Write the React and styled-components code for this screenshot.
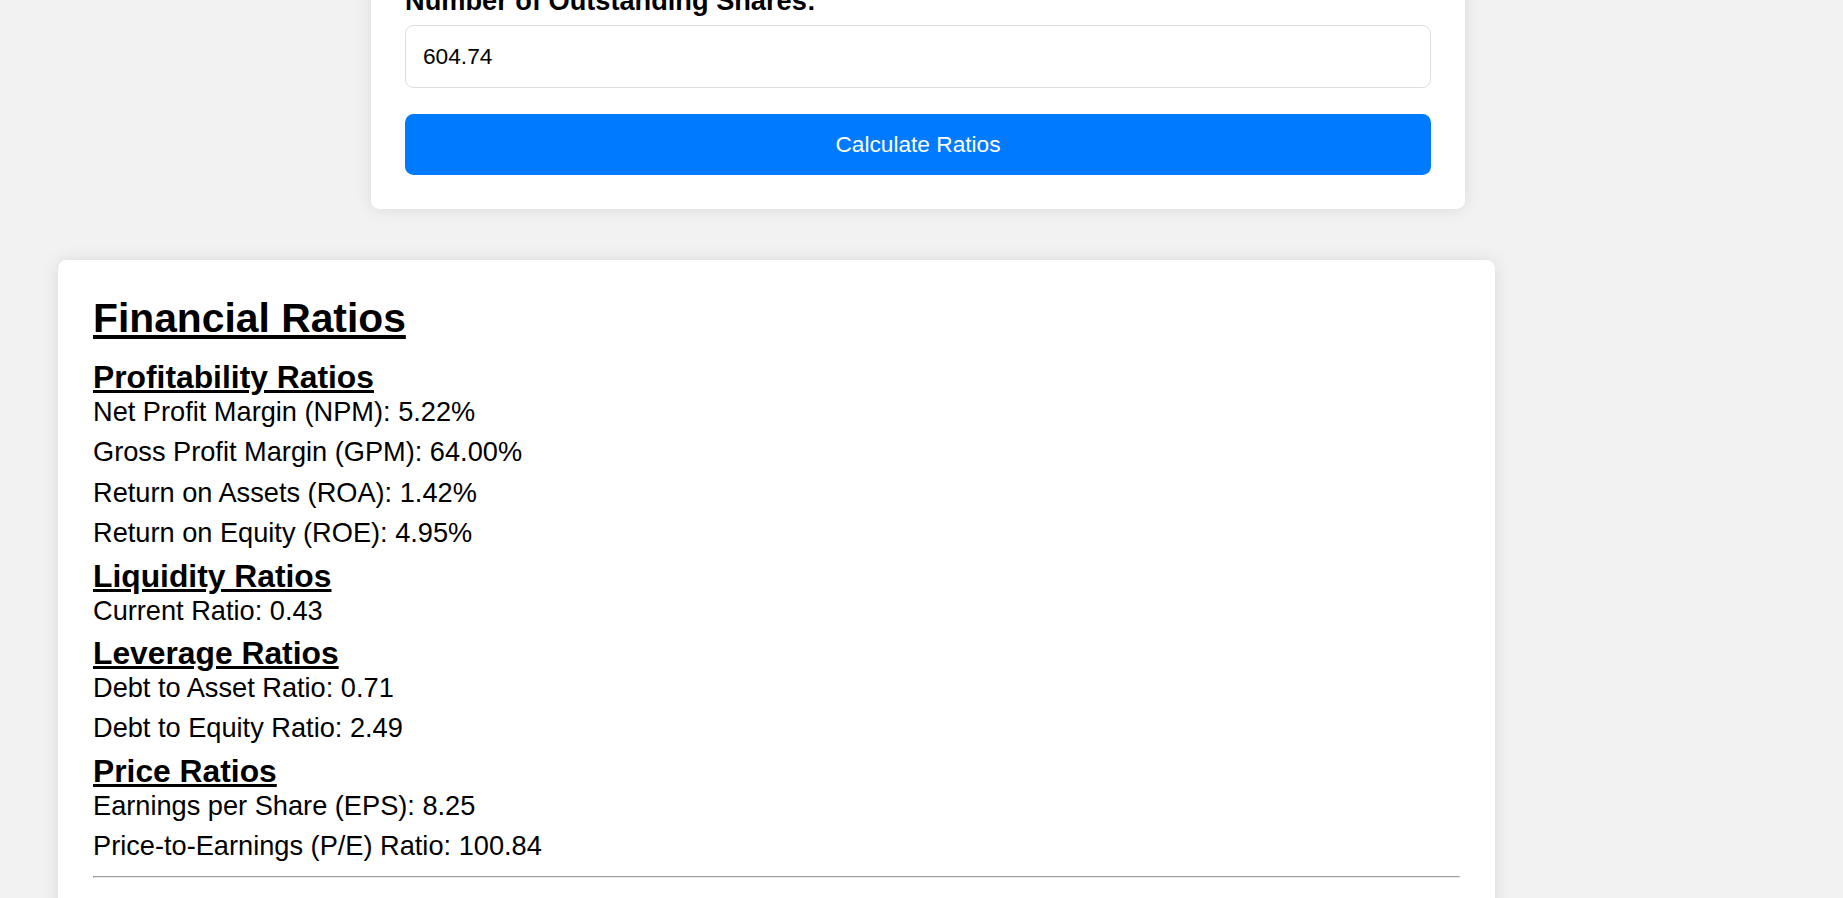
import React from "react";
import styled, { createGlobalStyle } from "styled-components";

const GlobalStyle = createGlobalStyle`
    body {
        margin: 0;
        background-color: #f2f2f2;
        font-family: "Liberation Sans", Arial, sans-serif;
        font-size: 27.2px;
        color: #000;
    }
`;

const Page = styled.div`
    display: flex;
    flex-direction: column;
    align-items: flex-start;
    padding: 0 8px 8px 8px;
`;

const FormCard = styled.div`
    box-sizing: border-box;
    width: 1094px;
    margin: -53px 0 0 363px;
    padding: 38px 34px 34px 34px;
    background-color: #fff;
    border-radius: 8.5px;
    box-shadow: 0 0 17px rgba(0, 0, 0, 0.1);
`;

const Label = styled.label`
    display: block;
    font-weight: bold;
    margin-bottom: 8px;
`;

const Input = styled.input`
    display: block;
    box-sizing: border-box;
    width: 100%;
    padding: 17px;
    border: 1px solid #ddd;
    border-radius: 8.5px;
    font-family: inherit;
    font-size: 22.7px;
    color: #000;
    margin-bottom: 26px;
    outline: none;
`;

const Button = styled.button`
    display: block;
    width: 100%;
    padding: 17px;
    border: none;
    border-radius: 8.5px;
    background-color: #007bff;
    color: #fff;
    font-family: inherit;
    font-size: 22.7px;
    cursor: pointer;
`;

const ResultsCard = styled.div`
    box-sizing: border-box;
    width: 1437px;
    margin: 51px 0 0 50px;
    padding: 35px 35px 60px 35px;
    background-color: #fff;
    border-radius: 8.5px;
    box-shadow: 0 0 17px rgba(0, 0, 0, 0.1);
`;

const Title = styled.h2`
    margin: 0 0 17px 0;
    font-size: 40.8px;
    text-decoration: underline;
`;

const GroupTitle = styled.h3`
    margin: 0;
    font-size: 31.8px;
    text-decoration: underline;
`;

const Ratio = styled.p`
    margin: 0 0 8.4px 0;
`;

const Divider = styled.hr`
    margin: 13.6px 0;
`;

const groups = [
    {
        title: "Profitability Ratios",
        items: [
            "Net Profit Margin (NPM): 5.22%",
            "Gross Profit Margin (GPM): 64.00%",
            "Return on Assets (ROA): 1.42%",
            "Return on Equity (ROE): 4.95%",
        ],
    },
    { title: "Liquidity Ratios", items: ["Current Ratio: 0.43"] },
    {
        title: "Leverage Ratios",
        items: ["Debt to Asset Ratio: 0.71", "Debt to Equity Ratio: 2.49"],
    },
    {
        title: "Price Ratios",
        items: ["Earnings per Share (EPS): 8.25", "Price-to-Earnings (P/E) Ratio: 100.84"],
    },
];

const App = () => {
    return (
        <Page>
            <GlobalStyle />
            <FormCard>
                <Label htmlFor="shares">Number of Outstanding Shares:</Label>
                <Input id="shares" type="text" defaultValue="604.74" />
                <Button>Calculate Ratios</Button>
            </FormCard>

            <ResultsCard>
                <Title>Financial Ratios</Title>
                {groups.map((group) => (
                    <div key={group.title}>
                        <GroupTitle>{group.title}</GroupTitle>
                        {group.items.map((item) => (
                            <Ratio key={item}>{item}</Ratio>
                        ))}
                    </div>
                ))}
                <Divider />
            </ResultsCard>
        </Page>
    );
};

export default App;
